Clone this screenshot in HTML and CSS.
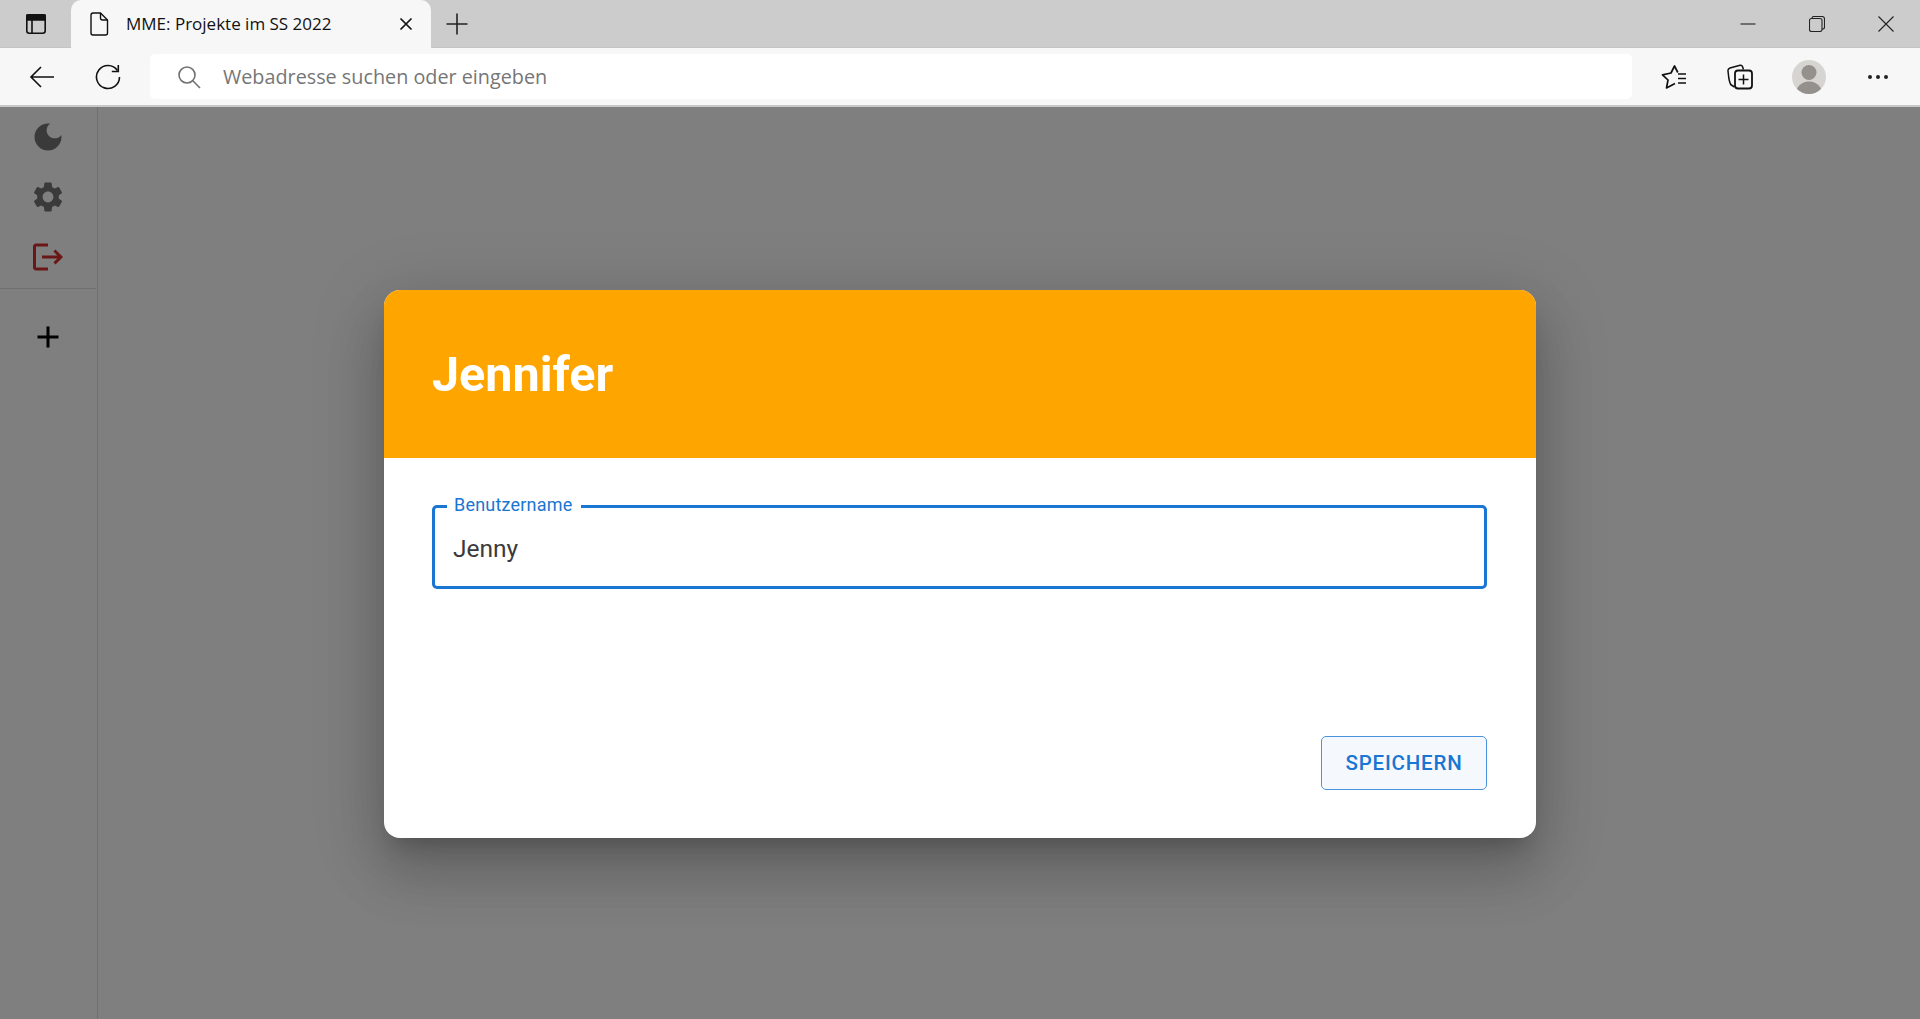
FILE: index.html
```html
<!DOCTYPE html>
<html lang="de">

<head>
    <meta charset="UTF-8">
    <title>MME: Projekte im SS 2022</title>
    <link rel="stylesheet" href="styles.css">
</head>

<body>
    <div class="tabstrip">
        <div class="tabs-btn">
            <svg width="24" height="24" viewBox="0 0 24 24" fill="none" stroke="#111" stroke-width="1.6">
                <rect x="2.8" y="2.8" width="18.4" height="18.4" rx="2.5"/>
                <path d="M3 3h18v5H3z" fill="#111"/>
                <path d="M8 8v13"/>
            </svg>
        </div>
        <div class="tab">
            <svg class="tab-icon" width="20" height="24" viewBox="0 0 20 24" fill="none" stroke="#111" stroke-width="1.4">
                <path d="M2 3.2c0-1.2.8-2.2 2-2.2h7.5L18.5 8v13c0 1.200-.8 2-2 2H4c-1.200 0-2-.8-2-2z"/>
                <path d="M11.500 1v5c0 1.200.8 2 2 2h5"/>
            </svg>
            <span class="tab-title">MME: Projekte im SS 2022</span>
            <svg class="tab-close" width="14" height="14" viewBox="0 0 14 14" stroke="#111" stroke-width="1.700">
                <path d="M1.500 1.500l11 11M12.500 1.500l-11 11"/>
            </svg>
        </div>
        <div class="newtab">
            <svg width="22" height="22" viewBox="0 0 22 22" stroke="#222" stroke-width="1.600">
                <path d="M11 0.500v21M0.500 11h21"/>
            </svg>
        </div>
        <div class="winctrls">
            <div class="winctrl">
                <svg width="16" height="16" viewBox="0 0 16 16" stroke="#222" stroke-width="1.100"><path d="M0.500 8h15"/></svg>
            </div>
            <div class="winctrl">
                <svg width="16" height="16" viewBox="0 0 16 16" fill="none" stroke="#222" stroke-width="1.100">
                    <rect x="0.500" y="2.500" width="12.500" height="13" rx="2"/>
                    <path d="M3 2.500c0-1.200.6-2 1.800-2h8.200c1.500 0 2.500 1 2.500 2.500v8.500c0 1-.6 1.600-2.500 1.800"/>
                </svg>
            </div>
            <div class="winctrl">
                <svg width="16" height="16" viewBox="0 0 16 16" stroke="#222" stroke-width="1.100"><path d="M0.500 0.500l15 15M15.500 0.500l-15 15"/></svg>
            </div>
        </div>
    </div>

    <div class="toolbar">
        <div class="toolbtn">
            <svg width="26" height="24" viewBox="0 0 26 24" fill="none" stroke="#111" stroke-width="1.600">
                <path d="M25 12H2M12 2L2 12l10 10"/>
            </svg>
        </div>
        <div class="toolbtn">
            <svg width="26" height="26" viewBox="0 0 26 26" fill="none" stroke="#111" stroke-width="1.600">
                <path d="M22.500 6.500A11.500 11.500 0 1 0 24.500 13"/>
                <path d="M23.300 1v6.500h-6.500"/>
            </svg>
        </div>
        <div class="addressbar">
            <svg class="search-icon" width="24" height="24" viewBox="0 0 24 24" fill="none" stroke="#707070" stroke-width="1.600">
                <circle cx="10" cy="10" r="8"/>
                <path d="M15.800 15.800L23 23"/>
            </svg>
            <span class="address-text">Webadresse suchen oder eingeben</span>
        </div>
        <div class="toolbtn">
            <svg width="26" height="26" viewBox="0 0 26 26" fill="none" stroke="#111" stroke-width="1.700" stroke-linejoin="round">
                <path d="M16.800 8.500L13.500 2 10 9 1.500 10.800 7 16l-1.500 8 8.500-4.500"/>
                <path d="M17 10h8M17 14.500h8M17 19h8"/>
            </svg>
        </div>
        <div class="toolbtn">
            <svg width="26" height="26" viewBox="0 0 26 26" fill="none" stroke="#111" stroke-width="1.500">
                <path d="M7.500 23L4.300 21c-1-.6-1.500-1.600-2.500-7L1 7c-.2-1.500.6-2.600 2-3L13 1.300c1.400-.2 2.300.5 2.700 1.700l.7 2.500"/>
                <rect x="8" y="6.500" width="17" height="18" rx="3" stroke-width="1.800"/>
                <path d="M16.500 10.500v10M11.500 15.500h10"/>
            </svg>
        </div>
        <div class="toolbtn avatar-btn">
            <svg width="34" height="34" viewBox="0 0 34 34">
                <circle cx="17" cy="17" r="17" fill="#d6d5d1"/>
                <circle cx="17" cy="12.500" r="7.500" fill="#94908b"/>
                <path d="M5 29c2-5 7-7.500 12-7.500s10 2.500 12 7.500c-3 3-7.500 5-12 5s-9-2-12-5z" fill="#94908b"/>
            </svg>
        </div>
        <div class="toolbtn">
            <svg width="22" height="6" viewBox="0 0 22 6" fill="#222">
                <circle cx="3" cy="3" r="2"/>
                <circle cx="11" cy="3" r="2"/>
                <circle cx="19" cy="3" r="2"/>
            </svg>
        </div>
    </div>

    <div class="page">
        <aside class="sidebar">
            <div class="side-group">
                <svg class="icon-grey" width="36" height="36" viewBox="0 0 24 24"><path d="M12 3c-4.970 0-9 4.030-9 9s4.030 9 9 9 9-4.030 9-9c0-.46-.04-.92-.1-1.360-.98 1.370-2.580 2.260-4.400 2.260-2.980 0-5.400-2.420-5.400-5.400 0-1.810.89-3.420 2.260-4.400-.44-.06-.9-.1-1.360-.1z"/></svg>
                <svg class="icon-grey" width="36" height="36" viewBox="0 0 24 24"><path d="M19.140 12.940c.04-.3.06-.61.06-.94 0-.32-.02-.64-.07-.94l2.030-1.580c.18-.14.23-.41.12-.61l-1.920-3.320c-.12-.22-.37-.29-.59-.22l-2.390.96c-.5-.38-1.030-.7-1.620-.94l-.36-2.540c-.04-.24-.24-.41-.48-.41h-3.840c-.24 0-.43.17-.47.41l-.36 2.540c-.59.24-1.130.57-1.620.94l-2.390-.96c-.22-.08-.47 0-.59.22L2.740 8.870c-.12.21-.08.47.12.61l2.030 1.580c-.05.3-.09.63-.09.94s.02.64.07.94l-2.030 1.580c-.18.14-.23.41-.12.61l1.920 3.320c.12.22.37.29.59.22l2.390-.96c.5.38 1.030.7 1.620.94l.36 2.540c.05.24.24.41.48.41h3.840c.24 0 .44-.17.47-.41l.36-2.540c.59-.24 1.130-.56 1.620-.94l2.390.96c.22.08.47 0 .59-.22l1.920-3.320c.12-.22.07-.47-.12-.61l-2.010-1.580zM12 15.600c-1.980 0-3.600-1.620-3.600-3.600s1.620-3.600 3.600-3.600 3.600 1.620 3.600 3.600-1.620 3.600-3.600 3.600z"/></svg>
                <svg class="icon-red" width="36" height="36" viewBox="0 0 24 24"><path d="M17 7l-1.410 1.410L18.170 11H8v2h10.170l-2.580 2.580L17 17l5-5zM4 5h8V3H4c-1.100 0-2 .9-2 2v14c0 1.100.9 2 2 2h8v-2H4V5z"/></svg>
            </div>
            <div class="side-group side-add">
                <svg width="36" height="36" viewBox="0 0 24 24"><path d="M19 13h-6v6h-2v-6H5v-2h6V5h2v6h6v2z"/></svg>
            </div>
        </aside>
        <main class="content"></main>

        <div class="backdrop">
            <div class="dialog">
                <header class="dialog-head">
                    <h1>Jennifer</h1>
                </header>
                <div class="dialog-body">
                    <div class="field">
                        <label class="field-label" for="benutzername">Benutzername</label>
                        <input class="field-input" id="benutzername" type="text" value="Jenny">
                    </div>
                    <div class="dialog-actions">
                        <button class="btn-save" type="button">SPEICHERN</button>
                    </div>
                </div>
            </div>
        </div>
    </div>
</body>

</html>
```

FILE: styles.css
```css
* {
    padding: 0;
    margin: 0;
    box-sizing: border-box;
}

html,
body {
    height: 100%;
    overflow: hidden;
}

body {
    display: flex;
    flex-direction: column;
    background-color: #fff;
    font-family: Roboto, sans-serif;
}

svg {
    display: block;
    flex-shrink: 0;
}

/* browser frame */
.tabstrip {
    display: flex;
    height: 48px;
    background-color: #cccccc;
    border-bottom: 1px solid #c4c4c4;
}

.tabs-btn {
    width: 71px;
    display: flex;
    align-items: center;
    justify-content: center;
}

.tab {
    width: 360px;
    height: 48px;
    display: flex;
    align-items: center;
    padding: 0 18px;
    background-color: #f7f7f7;
    border-radius: 10px 10px 0 0;
}

.tab-title {
    flex: 1;
    margin: 0 0 2px 17px;
    font-family: "Open Sans", sans-serif;
    font-size: 17px;
    color: #111;
    white-space: nowrap;
}

.newtab {
    width: 52px;
    display: flex;
    align-items: center;
    justify-content: center;
}

.winctrls {
    display: flex;
    margin-left: auto;
}

.winctrl {
    width: 69px;
    display: flex;
    align-items: center;
    justify-content: center;
}

.toolbar {
    display: flex;
    align-items: center;
    height: 59px;
    padding: 0 9px;
    background-color: #f7f7f7;
    border-bottom: 2px solid #c8c8c8;
}

.toolbtn {
    width: 66px;
    display: flex;
    align-items: center;
    justify-content: center;
}

.avatar-btn {
    width: 72px;
}

.addressbar {
    flex: 1;
    height: 45px;
    margin: 0 9px;
    display: flex;
    align-items: center;
    padding-left: 27px;
    background-color: #fff;
    border-radius: 5px;
}

.address-text {
    margin-left: 22px;
    font-family: "Open Sans", sans-serif;
    font-size: 19.8px;
    color: #767676;
}

/* app */
.page {
    flex: 1;
    display: flex;
    position: relative;
}

.sidebar {
    width: 98px;
    padding-right: 1px;
    border-right: 1px solid #e0e0e0;
}

.side-group {
    display: flex;
    flex-direction: column;
    align-items: center;
    gap: 24px;
    padding: 12px 0 13px;
    border-bottom: 1px solid #e0e0e0;
}

.side-add {
    padding-top: 30px;
    border-bottom: 0;
}

.icon-grey {
    fill: #757575;
}

.icon-red {
    fill: #d32f2f;
}

.content {
    flex: 1;
}

.backdrop {
    position: absolute;
    top: 0;
    right: 0;
    bottom: 0;
    left: 0;
    display: flex;
    align-items: center;
    justify-content: center;
    background-color: rgba(0, 0, 0, 0.5);
}

.dialog {
    width: 1152px;
    height: 548px;
    margin-top: 2px;
    display: flex;
    flex-direction: column;
    background-color: #fff;
    border-radius: 16px;
    overflow: hidden;
    box-shadow: 0 16px 22px -10px rgba(0, 0, 0, 0.2), 0 36px 56px 4px rgba(0, 0, 0, 0.14), 0 14px 68px 12px rgba(0, 0, 0, 0.12);
}

.dialog-head {
    height: 168px;
    display: flex;
    align-items: center;
    padding: 0 48px;
    background-color: #ffa500;
}

.dialog-head h1 {
    font-size: 48.5px;
    font-weight: 700;
    color: #fff;
}

.dialog-body {
    flex: 1;
    display: flex;
    flex-direction: column;
    justify-content: space-between;
    padding: 47px 49px 48px 48px;
}

.field {
    position: relative;
    height: 84px;
    border: 3px solid #1976d2;
    border-radius: 5px;
}

.field-label {
    position: absolute;
    top: -14px;
    left: 12px;
    padding: 0 9px 0 7px;
    background-color: #fff;
    font-size: 18px;
    letter-spacing: 0.2px;
    line-height: 21px;
    color: #1976d2;
}

.field-input {
    width: 100%;
    height: 100%;
    padding: 2px 18px 0;
    border: 0;
    outline: 0;
    background: transparent;
    font-family: Roboto, sans-serif;
    font-size: 24.5px;
    color: #3a3a3a;
}

.dialog-actions {
    display: flex;
    justify-content: flex-end;
}

.btn-save {
    width: 166px;
    height: 54px;
    border: 1px solid #4a94de;
    border-radius: 5px;
    background-color: #f5f9fd;
    font-family: Roboto, sans-serif;
    font-size: 20.5px;
    font-weight: 500;
    letter-spacing: 0.8px;
    color: #1976d2;
}
```
